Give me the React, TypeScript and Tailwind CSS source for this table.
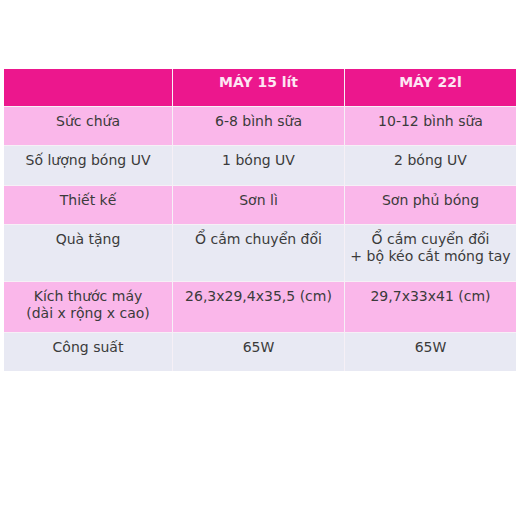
const rows = [
  { label: ["Sức chứa"], a: ["6-8 bình sữa"], b: ["10-12 bình sữa"], h: "h-[38px]", pink: true },
  { label: ["Số lượng bóng UV"], a: ["1 bóng UV"], b: ["2 bóng UV"], h: "h-[39px]", pink: false },
  { label: ["Thiết kế"], a: ["Sơn lì"], b: ["Sơn phủ bóng"], h: "h-[38px]", pink: true },
  { label: ["Quà tặng"], a: ["Ổ cắm chuyển đổi"], b: ["Ổ cắm cuyển đổi", "+ bộ kéo cắt móng tay"], h: "h-[56px]", pink: false },
  { label: ["Kích thước máy", "(dài x rộng x cao)"], a: ["26,3x29,4x35,5 (cm)"], b: ["29,7x33x41 (cm)"], h: "h-[50px]", pink: true },
  { label: ["Công suất"], a: ["65W"], b: ["65W"], h: "h-[38px]", pink: false },
];

const Cell = ({ lines, bg, h }: { lines: string[]; bg: string; h: string }) => (
  <div className={`${bg} ${h} pt-[6px] text-center text-[14px] text-[#3b3b3b]`}>
    {lines.map((l, i) => (
      <div key={i} className={lines.length > 1 && i > 0 ? "leading-[17px]" : "leading-[17px]"}>
        {l}
      </div>
    ))}
  </div>
);

export default function App() {
  return (
    <div
      className="min-h-[521px] w-[521px] bg-white pl-[4px] pt-[69px]"
      style={{ fontFamily: "'DejaVu Sans', Verdana, sans-serif" }}
    >
      <div className="grid w-[512px] grid-cols-[168px_171px_171px] gap-px bg-[#f6f0f6]">
        <div className="h-[37px] bg-[#ec178d]" />
        <div className="h-[37px] bg-[#ec178d] pt-[5px] text-center text-[14px] font-bold leading-[17px] text-[#fde6f3]">
          MÁY 15 lít
        </div>
        <div className="h-[37px] bg-[#ec178d] pt-[5px] text-center text-[14px] font-bold leading-[17px] text-[#fde6f3]">
          MÁY 22l
        </div>
        {rows.map((r, i) => {
          const bg = r.pink ? "bg-[#fab7ea]" : "bg-[#e8e9f3]";
          return [
            <Cell key={`l${i}`} lines={r.label} bg={bg} h={r.h} />,
            <Cell key={`a${i}`} lines={r.a} bg={bg} h={r.h} />,
            <Cell key={`b${i}`} lines={r.b} bg={bg} h={r.h} />,
          ];
        })}
      </div>
    </div>
  );
}
